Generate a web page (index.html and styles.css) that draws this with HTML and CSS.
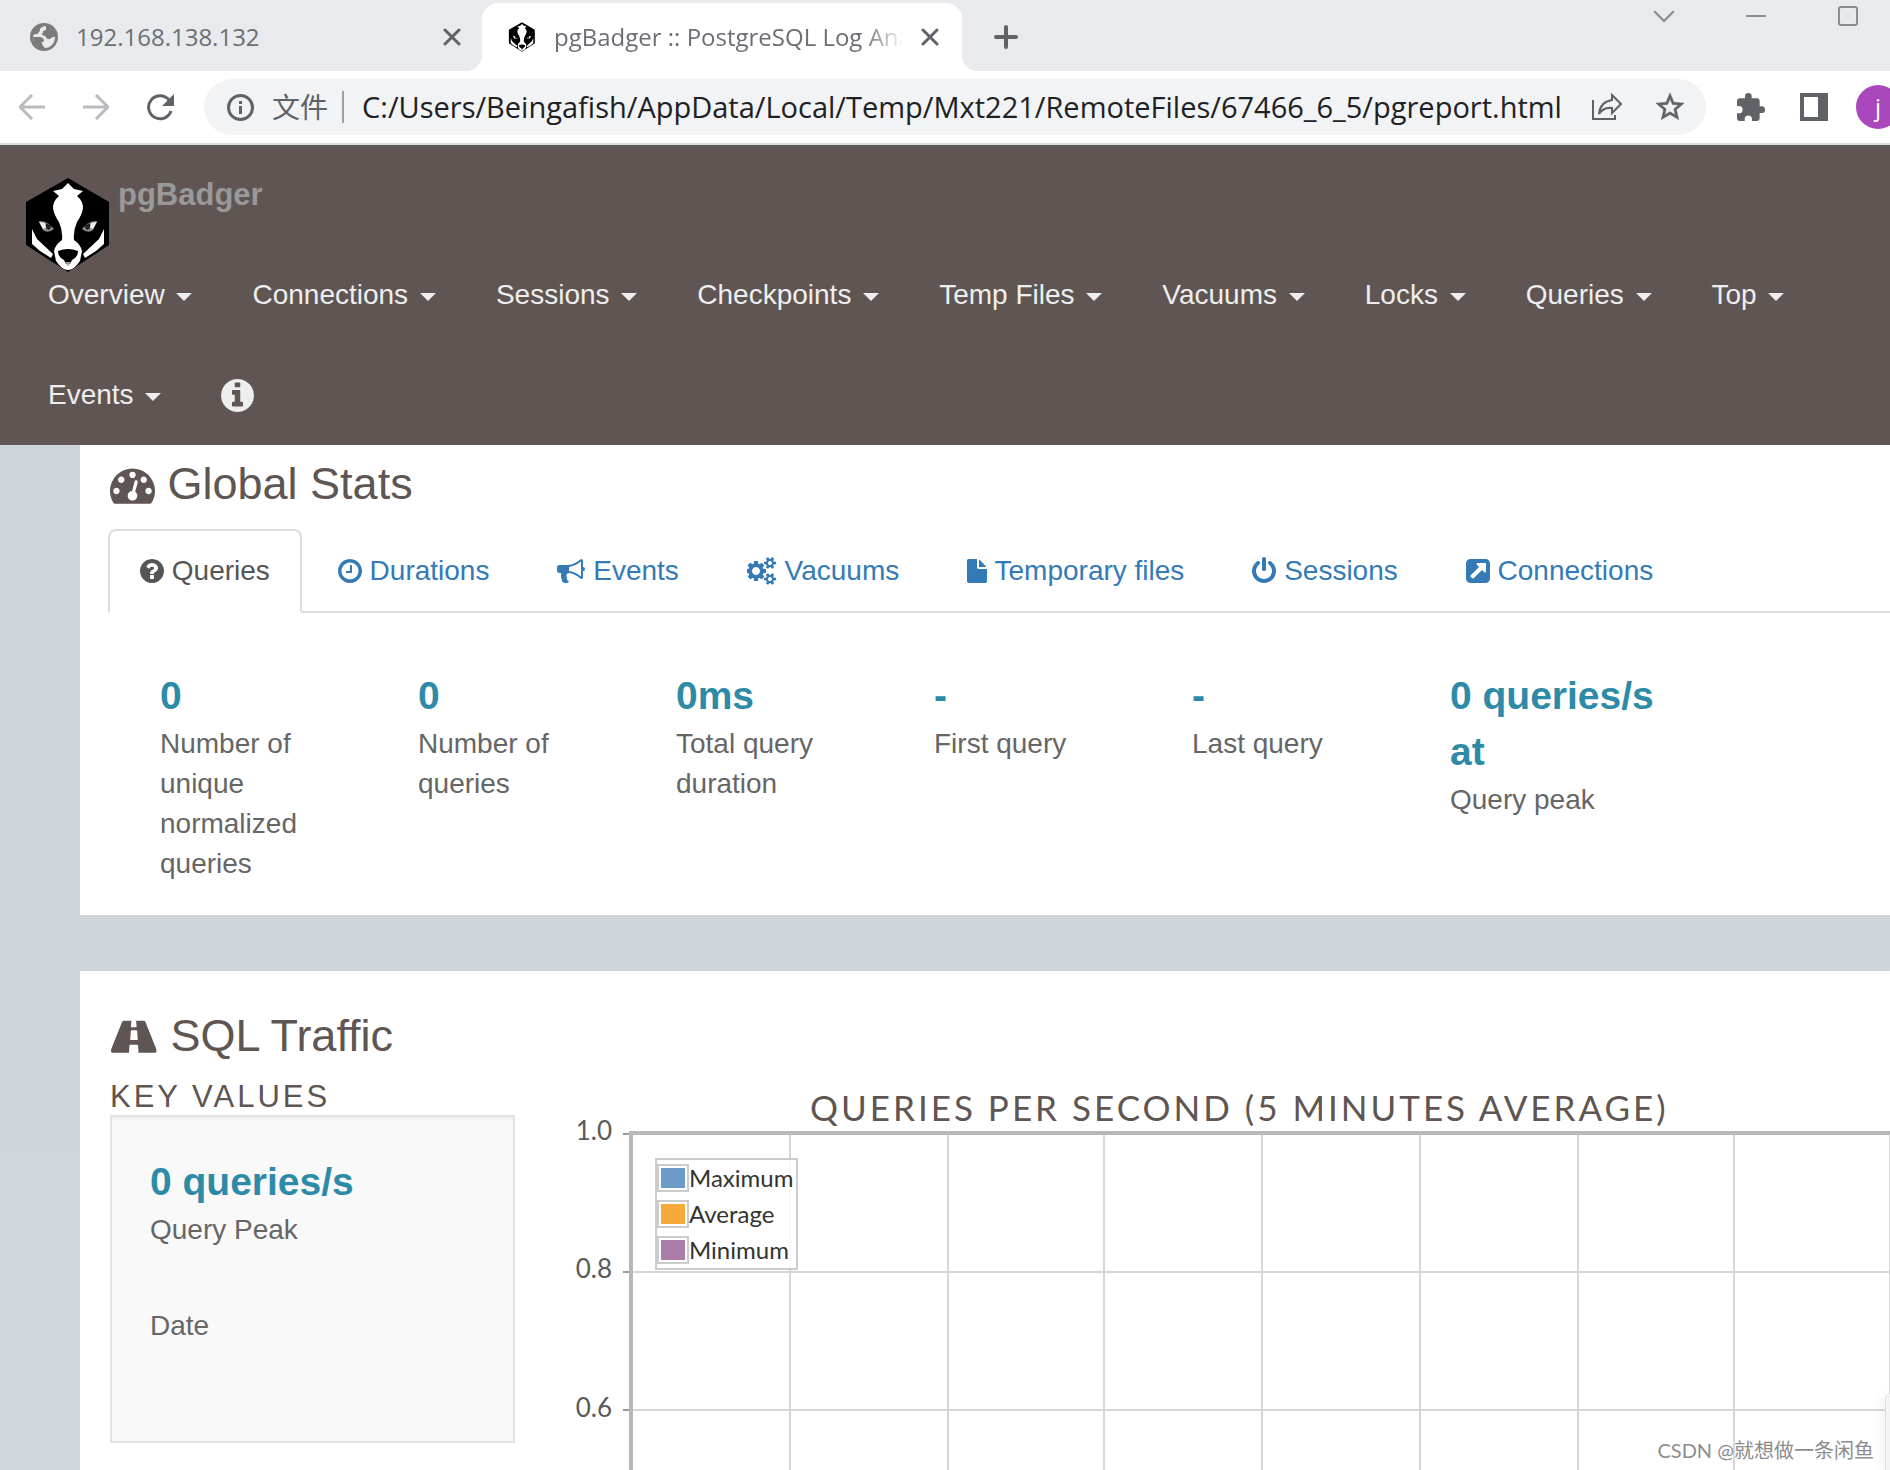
FILE: index.html
```html
<!DOCTYPE html>
<html lang="en">
<head>
<meta charset="utf-8">
<title>pgBadger :: PostgreSQL Log Analyzer</title>
<link rel="stylesheet" href="styles.css">
</head>
<body>
<svg class="defs" aria-hidden="true">
  <symbol id="badger" viewBox="0 0 84 96">
    <path d="M42 1 83 25V68L42 95 0 68V25Z" fill="#000"/>
    <path d="M42 6 48 12 57 14 51 19Q57 24 57 31 56 38 51 45 47 54 48 63 55 68 56 74L54 84Q48 93 42 93 36 93 30 84L28 74Q29 68 36 63 37 54 33 45 28 38 27 31 27 24 33 19L27 14 36 12Z" fill="#fff"/>
    <path d="M32 74Q42 70 52 74 52 80 46 83L44 87H40L38 83Q32 80 32 74Z" fill="#000"/>
    <path d="M39 85H45L42 89Z" fill="#999"/>
    <path d="M6 52 11 62 27 77 25 81 14 74 6 67ZM78 52 73 62 57 77 59 81 70 74 78 67Z" fill="#fff"/>
    <path d="M13 44Q21 43 28 52 22 57 17 53ZM71 44Q63 43 56 52 62 57 67 53Z" fill="#888"/>
    <path d="M13 45 19 46 20 51 17 52ZM71 45 65 46 64 51 67 52Z" fill="#eee"/>
    <path d="M20 46 26 49 23 53 20 51ZM64 46 58 49 61 53 64 51Z" fill="#222"/>
  </symbol>
</svg>

<header class="browser">
  <div class="tabstrip">
    <div class="tab">
      <svg class="favicon" viewBox="0 0 28 28"><circle cx="14" cy="14" r="14" fill="#7b7b7b"/><path d="M16 3C12 3 9 6 10 8 8 9 9 12 4 11 2 16 3 19 6 19H10C13 20 12 23 15 25 21 25 25 20 25 14H22C20 17 17 17 16 14 15 12 11 13 12 10 14 11 14 8 16 7Z" fill="#e8eaed"/><path d="M3 14H9Q14 14 14 18L11 20V25Q3 22 3 14ZM16 3H18Q25 6 25 13 21 16 18 14L17 11H13V8L16 7Z" fill="#7b7b7b"/></svg>
      <span class="tab-title">192.168.138.132</span>
      <button class="icon-btn" aria-label="Close tab"><svg width="18" height="18" viewBox="0 0 18 18"><path d="M2 2 16 16M16 2 2 16" stroke="#5f6368" stroke-width="3" stroke-linecap="round"/></svg></button>
    </div>
    <div class="tab tab-active">
      <svg class="favicon favicon-badger"><use href="#badger"/></svg>
      <span class="tab-title tab-title-fade">pgBadger :: PostgreSQL Log Analyzer</span>
      <button class="icon-btn" aria-label="Close tab"><svg width="18" height="18" viewBox="0 0 18 18"><path d="M2 2 16 16M16 2 2 16" stroke="#5f6368" stroke-width="3" stroke-linecap="round"/></svg></button>
    </div>
    <button class="icon-btn new-tab" aria-label="New tab"><svg width="24" height="24" viewBox="0 0 24 24"><path d="M12 2V22M2 12H22" stroke="#5f6368" stroke-width="4" stroke-linecap="round"/></svg></button>
    <div class="window-controls">
      <button class="icon-btn" aria-label="Search tabs"><svg width="20" height="20" viewBox="0 0 20 20"><path d="M0 5 10 15 20 5" fill="none" stroke="#8a8b8d" stroke-width="2"/></svg></button>
      <button class="icon-btn" aria-label="Minimize"><svg width="20" height="20" viewBox="0 0 20 20"><path d="M0 10H20" stroke="#8a8b8d" stroke-width="2"/></svg></button>
      <button class="icon-btn" aria-label="Maximize"><svg width="20" height="20" viewBox="0 0 20 20"><rect x="1" y="1" width="18" height="18" rx="2" fill="none" stroke="#8a8b8d" stroke-width="2"/></svg></button>
    </div>
  </div>
  <div class="toolbar">
    <div class="nav-buttons">
      <button class="icon-btn" aria-label="Back"><svg width="26" height="26" viewBox="0 0 26 26"><path d="M26 13H2M13 1 1 13 13 25" fill="none" stroke="#b9bbbe" stroke-width="3"/></svg></button>
      <button class="icon-btn" aria-label="Forward"><svg width="26" height="26" viewBox="0 0 26 26"><path d="M0 13H24M13 1 25 13 13 25" fill="none" stroke="#b9bbbe" stroke-width="3"/></svg></button>
      <button class="icon-btn" aria-label="Reload"><svg width="27" height="27" viewBox="0 0 27 27"><path d="M22 6A11.500 11.500 0 1 0 24 17" fill="none" stroke="#5f6368" stroke-width="3"/><path d="M27 0V12H15Z" fill="#5f6368"/></svg></button>
    </div>
    <div class="omnibox">
      <svg width="27" height="27" viewBox="0 0 27 27"><circle cx="13.500" cy="13.500" r="12" fill="none" stroke="#5f6368" stroke-width="3"/><path d="M12 7h3v3h-3zM12 12h3v8h-3z" fill="#5f6368"/></svg>
      <label class="scheme" for="url">文件</label>
      <input class="url" id="url" type="text" value="C:/Users/Beingafish/AppData/Local/Temp/Mxt221/RemoteFiles/67466_6_5/pgreport.html">
      <button class="icon-btn" aria-label="Share"><svg width="30" height="28" viewBox="0 0 30 28"><path d="M1 7V26H23V22" fill="none" stroke="#5f6368" stroke-width="2"/><path d="M20 2 29 11 20 20V15Q11 14 7 21 8 9 20 7Z" fill="none" stroke="#5f6368" stroke-width="2"/></svg></button>
      <button class="icon-btn" aria-label="Bookmark"><svg width="28" height="28" viewBox="2 2 20 20"><path d="M22 9.240l-7.190-.620L12 2 9.190 8.630 2 9.240l5.460 4.730L5.820 21 12 17.270 18.180 21l-1.630-7.030L22 9.240zM12 15.400l-3.760 2.270 1-4.280-3.320-2.880 4.380-.380L12 6.100l1.710 4.040 4.380.380-3.320 2.880 1 4.280L12 15.400z" fill="#5f6368" stroke="#5f6368" stroke-width=".4"/></svg></button>
    </div>
    <div class="actions">
      <button class="icon-btn" aria-label="Extensions"><svg width="28" height="28" viewBox="2 1 21 21"><path d="M20.500 11H19V7c0-1.100-.9-2-2-2h-4V3.500a2.500 2.500 0 0 0-5 0V5H4c-1.100 0-2 .9-2 2v3.800h1.500a2.700 2.700 0 0 1 0 5.400H2V20c0 1.100.9 2 2 2h3.800v-1.500a2.700 2.700 0 0 1 5.400 0V22H17c1.100 0 2-.9 2-2v-4h1.500a2.500 2.500 0 0 0 0-5z" fill="#5f6368"/></svg></button>
      <button class="icon-btn" aria-label="Side panel"><svg width="28" height="28" viewBox="0 0 28 28"><path fill-rule="evenodd" d="M0 0H28V28H0ZM4 4V24H18V4Z" fill="#5f6368"/></svg></button>
      <button class="avatar" aria-label="Profile">j</button>
    </div>
  </div>
</header>

<nav class="navbar">
  <a class="brand" href="#"><svg class="brand-logo"><use href="#badger"/></svg><span>pgBadger</span></a>
  <ul class="menu">
    <li><a href="#">Overview <span class="caret"></span></a></li>
    <li><a href="#">Connections <span class="caret"></span></a></li>
    <li><a href="#">Sessions <span class="caret"></span></a></li>
    <li><a href="#">Checkpoints <span class="caret"></span></a></li>
    <li><a href="#">Temp Files <span class="caret"></span></a></li>
    <li><a href="#">Vacuums <span class="caret"></span></a></li>
    <li><a href="#">Locks <span class="caret"></span></a></li>
    <li><a href="#">Queries <span class="caret"></span></a></li>
    <li><a href="#">Top <span class="caret"></span></a></li>
    <li><a href="#">Events <span class="caret"></span></a></li>
    <li><a href="#" aria-label="About"><svg class="about" viewBox="128 128 1536 1536"><path d="M1152 1376v-160q0-14-9-23t-23-9h-96v-512q0-14-9-23t-23-9h-320q-14 0-23 9t-9 23v160q0 14 9 23t23 9h96v320h-96q-14 0-23 9t-9 23v160q0 14 9 23t23 9h448q14 0 23-9t9-23zm-128-896v-160q0-14-9-23t-23-9h-192q-14 0-23 9t-9 23v160q0 14 9 23t23 9h192q14 0 23-9t9-23zm640 416q0 209-103 385.500t-279.500 279.500-385.500 103-385.500-103-279.500-279.500-103-385.500 103-385.500 279.500-279.500 385.500-103 385.500 103 279.500 279.500 103 385.500z"/></svg></a></li>
  </ul>
</nav>

<main class="report">
  <section class="panel">
    <h2><svg class="head-icon" viewBox="0 0 1792 1792"><path d="M384 1152q0-53-37.500-90.500t-90.500-37.500-90.500 37.500-37.500 90.500 37.500 90.500 90.500 37.500 90.500-37.500 37.500-90.500zm192-448q0-53-37.500-90.500t-90.500-37.500-90.500 37.500-37.500 90.500 37.500 90.500 90.500 37.500 90.500-37.500 37.500-90.500zm428 481l101-382q6-26-7.500-48.500t-38.500-29.500-48 6.500-30 39.500l-101 382q-60 5-107 43.500t-63 98.500q-20 77 20 146t117 89 146-20 89-117q16-60-6-117t-72-91zm660-33q0-53-37.500-90.500t-90.500-37.500-90.500 37.500-37.500 90.500 37.500 90.500 90.500 37.500 90.500-37.500 37.500-90.500zm-640-640q0-53-37.500-90.500t-90.500-37.500-90.500 37.500-37.500 90.500 37.500 90.500 90.500 37.500 90.500-37.500 37.500-90.500zm448 192q0-53-37.500-90.500t-90.500-37.500-90.500 37.500-37.500 90.500 37.500 90.500 90.500 37.500 90.500-37.500 37.500-90.500zm320 448q0 261-141 483-19 29-54 29h-1402q-35 0-54-29-141-221-141-483 0-182 71-348t191-286 286-191 348-71 348 71 286 191 191 286 71 348z"/></svg> Global Stats</h2>
    <ul class="tabs">
      <li class="active"><a href="#"><svg class="i24" viewBox="128 0 1536 1792"><path d="M1024 1376v-192q0-14-9-23t-23-9h-192q-14 0-23 9t-9 23v192q0 14 9 23t23 9h192q14 0 23-9t9-23zm256-672q0-88-55.500-163t-138.500-116-170-41q-243 0-371 213-15 24 8 42l132 100q7 6 19 6 16 0 25-12 53-68 86-92 34-24 86-24 48 0 85.500 26t37.500 59q0 38-20 61t-68 45q-63 28-115.500 86.500t-52.500 125.500v36q0 14 9 23t23 9h192q14 0 23-9t9-23q0-19 21.500-49.500t54.500-49.500q32-18 49-28.500t46-35 44.500-48 28-60.500 12.500-81zm384 192q0 209-103 385.500t-279.500 279.500-385.500 103-385.500-103-279.500-279.500-103-385.500 103-385.500 279.500-279.500 385.500-103 385.500 103 279.500 279.500 103 385.500z"/></svg> Queries</a></li>
      <li><a href="#"><svg class="i24" viewBox="128 0 1536 1792"><path d="M1024 544v448q0 14-9 23t-23 9h-320q-14 0-23-9t-9-23v-64q0-14 9-23t23-9h224v-352q0-14 9-23t23-9h64q14 0 23 9t9 23zm416 352q0-148-73-273t-198-198-273-73-273 73-198 198-73 273 73 273 198 198 273 73 273-73 198-198 73-273zm224 0q0 209-103 385.500t-279.500 279.500-385.500 103-385.500-103-279.500-279.500-103-385.500 103-385.500 279.500-279.500 385.500-103 385.500 103 279.500 279.500 103 385.500z"/></svg> Durations</a></li>
      <li><a href="#"><svg class="i28" viewBox="0 0 1792 1792"><path d="M1664 640q53 0 90.500 37.500t37.500 90.500-37.500 90.500-90.500 37.500v384q0 52-38 90t-90 38q-417-347-812-380-58 19-91 66t-31 100.500 40 92.500q-20 33-23 65.500t6 58 33.500 55 48 50 61.500 50.500q-29 58-111.500 83t-168.500 11.500-132-55.500q-7-23-29.500-87.500t-32-94.500-23-89-15-101 3.500-98.500 22-110.500h-122q-66 0-113-47t-47-113v-192q0-66 47-113t113-47h480q435 0 896-384 52 0 90 38t38 90v384zm-128 604v-954q-394 302-768 343v270q377 42 768 341z"/></svg> Events</a></li>
      <li><a href="#"><svg class="i30" viewBox="0 0 1920 1792"><path d="M832 896q0-106-75-181t-181-75-181 75-75 181 75 181 181 75 181-75 75-181zm768 512q0-52-38-90t-90-38-90 38-38 90q0 53 37.500 90.500t90.500 37.500 90.500-37.500 37.500-90.500zm0-1024q0-52-38-90t-90-38-90 38-38 90q0 53 37.500 90.500t90.500 37.500 90.500-37.500 37.500-90.500zm-384 421v185q0 10-7 19.500t-16 10.500l-155 24q-11 35-32 76 34 48 90 115 7 11 7 20 0 12-7 19-23 30-82.500 89.500t-78.500 59.500q-11 0-21-7l-115-90q-37 19-77 31-11 108-23 155-7 24-30 24h-186q-11 0-20-7.500t-10-17.500l-23-153q-34-10-75-31l-118 89q-7 7-20 7-11 0-21-8-144-133-144-160 0-9 7-19 10-14 41-53t47-61q-23-44-35-82l-152-24q-10-1-17-9.500t-7-19.500v-185q0-10 7-19.500t16-10.500l155-24q11-35 32-76-34-48-90-115-7-11-7-20 0-12 7-20 22-30 82-89t79-59q11 0 21 7l115 90q34-18 77-32 11-108 23-154 7-24 30-24h186q11 0 20 7.500t10 17.500l23 153q34 10 75 31l118-89q8-7 20-7 11 0 21 8 144 133 144 160 0 8-7 19-12 16-42 54t-45 60q23 48 34 82l152 23q10 2 17 10.500t7 19.500zm640 533v140q0 16-149 31-12 27-30 52 51 113 51 138 0 4-4 7-122 71-124 71-8 0-46-47t-52-68q-20 2-30 2t-30-2q-14 21-52 68t-46 47q-2 0-124-71-4-3-4-7 0-25 51-138-18-25-30-52-149-15-149-31v-140q0-16 149-31 13-29 30-52-51-113-51-138 0-4 4-7 4-2 35-20t59-34 30-16q8 0 46 46.500t52 67.500q20-2 30-2t30 2q51-71 92-112l6-2q4 0 124 70 4 3 4 7 0 25-51 138 17 23 30 52 149 15 149 31zm0-1024v140q0 16-149 31-12 27-30 52 51 113 51 138 0 4-4 7-122 71-124 71-8 0-46-47t-52-68q-20 2-30 2t-30-2q-14 21-52 68t-46 47q-2 0-124-71-4-3-4-7 0-25 51-138-18-25-30-52-149-15-149-31v-140q0-16 149-31 13-29 30-52-51-113-51-138 0-4 4-7 4-2 35-20t59-34 30-16q8 0 46 46.500t52 67.500q20-2 30-2t30 2q51-71 92-112l6-2q4 0 124 70 4 3 4 7 0 25-51 138 17 23 30 52 149 15 149 31z"/></svg> Vacuums</a></li>
      <li><a href="#"><svg class="i20" viewBox="0 -128 1280 1792"><path d="M0 96q0-40 28-68t68-28h544v544q0 40 28 68t68 28h544v800q0 40-28 68t-68 28h-1088q-40 0-68-28t-28-68zM768 24q18 10 36 28l392 392q18 18 36 68h-464z"/></svg> Temporary files</a></li>
      <li><a href="#"><svg class="i24" viewBox="128 0 1536 1792"><path d="M1664 896q0 156-61 298t-164 245-245 164-298 61-298-61-245-164-164-245-61-298q0-182 80.500-343t226.500-270q43-32 95.500-25t83.500 50q32 42 24.500 94.500t-49.500 84.500q-98 74-151.500 181t-53.500 228q0 104 40.500 198.500t109.500 163.500 163.500 109.500 198.500 40.500 198.500-40.500 163.500-109.500 109.500-163.500 40.500-198.500q0-121-53.500-228t-151.500-181q-42-32-49.500-84.500t24.500-94.500q31-43 84-50t95 25q146 109 226.500 270t80.500 343zm-640-768v640q0 52-38 90t-90 38-90-38-38-90v-640q0-52 38-90t90-38 90 38 38 90z"/></svg> Sessions</a></li>
      <li><a href="#"><svg class="i24" viewBox="128 0 1536 1792"><path d="M1408 928v-480q0-26-19-45t-45-19h-480q-42 0-59 39-17 41 14 70l144 144-534 534q-19 19-19 45t19 45l102 102q19 19 45 19t45-19l534-534 144 144q18 19 45 19 12 0 25-5 39-17 39-59zm256-512v960q0 119-84.500 203.500t-203.500 84.500h-960q-119 0-203.500-84.500t-84.500-203.500v-960q0-119 84.500-203.500t203.500-84.500h960q119 0 203.500 84.500t84.500 203.500z"/></svg> Connections</a></li>
    </ul>
    <ul class="stats">
      <li><span class="value">0</span><span class="label">Number of unique normalized queries</span></li>
      <li><span class="value">0</span><span class="label">Number of queries</span></li>
      <li><span class="value">0ms</span><span class="label">Total query duration</span></li>
      <li><span class="value">-</span><span class="label">First query</span></li>
      <li><span class="value">-</span><span class="label">Last query</span></li>
      <li><span class="value">0 queries/s at</span><span class="label">Query peak</span></li>
    </ul>
  </section>

  <section class="panel panel-traffic">
    <h2><svg class="head-icon head-icon-road" viewBox="0 0 1920 1792"><path d="M1111 1005v-4l-24-320q-1-13-11-22.500t-23-9.500h-186q-13 0-23 9.500t-11 22.500l-24 320v4q-1 12 8 20t21 8h244q12 0 21-8t8-20zm749 467q0 73-46 73h-704q13 0 22-9.500t8-22.500l-20-256q-1-13-11-22.500t-23-9.500h-272q-13 0-23 9.500t-11 22.500l-20 256q-1 13 8 22.500t22 9.500h-704q-46 0-46-73 0-54 26-116l417-1044q8-19 26-33t38-14h339q-13 0-23 9.500t-11 22.500l-15 192q-1 14 8 23t22 9h166q13 0 22-9t8-23l-15-192q-1-13-11-22.500t-23-9.500h339q20 0 38 14t26 33l417 1044q26 62 26 116z"/></svg> SQL Traffic</h2>
    <div class="traffic">
      <div class="keys">
        <h4>Key values</h4>
        <ul class="well">
          <li><span class="value">0 queries/s</span><span class="label">Query Peak</span></li>
          <li><span class="value"></span><span class="label">Date</span></li>
        </ul>
      </div>
      <div class="chart">
        <h3>Queries per second (5 minutes average)</h3>
        <div class="plot">
          <svg class="plot-grid" width="1600" height="720" aria-hidden="true">
            <g stroke="#d6d6d6" stroke-width="2">
              <path d="M238 14V720M396 14V720M552 14V720M710 14V720M868 14V720M1026 14V720M1182 14V720M1338 14V720"/>
              <path d="M80 152H1600M80 290H1600"/>
            </g>
            <path d="M71 14H78M71 152H78M71 290H78" stroke="#999" stroke-width="2"/>
            <path d="M79 720V13H1600" fill="none" stroke="#b8b8b8" stroke-width="4"/>
            <g class="ticks" text-anchor="end">
              <text x="60" y="20">1.0</text>
              <text x="60" y="158">0.8</text>
              <text x="60" y="297">0.6</text>
            </g>
          </svg>
          <ul class="legend">
            <li><span class="swatch swatch-max"></span>Maximum</li>
            <li><span class="swatch swatch-avg"></span>Average</li>
            <li><span class="swatch swatch-min"></span>Minimum</li>
          </ul>
        </div>
      </div>
    </div>
  </section>
  <div class="side-flyout"></div>
  <p class="watermark">CSDN @就想做一条闲鱼</p>
</main>
</body>
</html>
```
FILE: styles.css
```css
* { box-sizing: border-box; }

body {
  margin: 0;
  height: 100vh;
  display: flex;
  flex-direction: column;
  overflow: hidden;
  background: #fff;
  font-family: "Liberation Sans", Arial, sans-serif;
  font-size: 28px;
  line-height: 40px;
  color: #666;
}

ul { list-style: none; margin: 0; padding: 0; }
h2, h3, h4, p { margin: 0; font-weight: 400; }
a { color: inherit; text-decoration: none; }
svg { flex: none; }
.defs { position: absolute; width: 0; height: 0; }

.icon-btn {
  display: flex;
  flex: none;
  padding: 0;
  border: 0;
  background: none;
}

/* Browser frame */
.browser {
  flex: none;
  font-family: "Open Sans", "Noto Sans CJK SC", sans-serif;
  border-bottom: 2px solid #dadce0;
}

.tabstrip {
  display: flex;
  height: 71px;
  padding-top: 3px;
  background: #e8eaed;
}

.tab {
  display: flex;
  align-items: center;
  width: 482px;
  padding: 0 21px 0 30px;
}

.tab-active {
  position: relative;
  width: 480px;
  padding: 0 23px 0 26px;
  border-radius: 16px 16px 0 0;
  background: #fff;
}

.tab-active::before,
.tab-active::after {
  content: "";
  position: absolute;
  bottom: 0;
  width: 16px;
  height: 16px;
}
.tab-active::before { right: 100%; background: radial-gradient(circle at 0 0, transparent 16px, #fff 16px); }
.tab-active::after { left: 100%; background: radial-gradient(circle at 100% 0, transparent 16px, #fff 16px); }

.favicon { width: 28px; height: 28px; }
.favicon-badger { height: 30px; }

.tab-title {
  flex: 1;
  margin: 0 16px 0 18px;
  overflow: hidden;
  white-space: nowrap;
  font-size: 24px;
  line-height: 36px;
  color: #6b6f74;
}
.tab-title-fade {
  mask-image: linear-gradient(to right, #000 310px, transparent 350px);
}

.new-tab { align-self: center; margin-left: 32px; }

.window-controls {
  display: flex;
  align-self: flex-start;
  gap: 72px;
  margin-left: auto;
  padding: 3px 32px 0 0;
}

.toolbar {
  display: flex;
  align-items: center;
  height: 72px;
  padding-left: 19px;
}

.nav-buttons { display: flex; gap: 38px; }

.omnibox {
  display: flex;
  flex: 1;
  align-items: center;
  gap: 34px;
  height: 56px;
  margin: 0 31px 0 30px;
  padding: 0 22px 0 23px;
  border-radius: 28px;
  background: #f1f3f4;
}

.scheme {
  margin: 0 -20px 0 -16px;
  padding-right: 14px;
  border-right: 2px solid #9aa0a6;
  font-size: 28px;
  line-height: 32px;
  color: #5f6368;
}

.url {
  flex: 1;
  min-width: 0;
  height: 40px;
  margin-right: -16px;
  padding: 0 0 0 4px;
  border: 0;
  background: none;
  font: 29px/40px "Open Sans", sans-serif;
  color: #202124;
}

.actions {
  display: flex;
  align-items: center;
  gap: 28px;
  margin-right: -10px;
}
.actions .icon-btn:first-child { margin-right: 7px; }

.avatar {
  width: 44px;
  height: 44px;
  padding: 0;
  border: 0;
  border-radius: 50%;
  background: #ab47bc;
  font: 24px/40px "Open Sans", sans-serif;
  color: #fff;
}

/* Report navigation */
.navbar { flex: none; background: #5f5553; }

.brand {
  display: flex;
  gap: 8px;
  height: 100px;
  padding: 30px 26px 0;
  font-size: 31px;
  font-weight: 700;
  color: #999;
}
.brand-logo { width: 84px; height: 96px; margin-top: 2px; }

.menu {
  display: flex;
  flex-wrap: wrap;
  padding: 0 18px;
  color: #eee;
}
.menu a { display: block; padding: 30px; }

.caret {
  display: inline-block;
  margin-left: 4px;
  border: 8px solid transparent;
  border-top-color: currentColor;
  border-bottom: 0;
  vertical-align: middle;
}

.about {
  display: block;
  width: 33px;
  height: 33px;
  margin: 4px 0 3px;
  fill: currentColor;
}

/* Report body */
.report {
  position: relative;
  flex: 1;
  min-height: 0;
  overflow: hidden;
  padding-left: 80px;
  background: linear-gradient(#cdd5d8, #d1d7dc);
}

.panel {
  margin-bottom: 56px;
  padding: 15px 0 31px 28px;
  background: #fff;
}
.panel-traffic {
  height: 100%;
  padding: 41px 0 0 30px;
}

h2 {
  padding-left: 2px;
  font-size: 45px;
  line-height: 48px;
  color: #5f5553;
}
.panel-traffic h2 { padding-left: 0; }

.head-icon {
  width: 45px;
  height: 45px;
  vertical-align: -8px;
  fill: currentColor;
}
.head-icon-road { width: 48px; }

.tabs {
  display: flex;
  gap: 4px;
  margin-top: 21px;
  border-bottom: 2px solid #ddd;
  color: #337ab7;
}
.tabs a {
  display: block;
  margin-bottom: -2px;
  padding: 20px 30px;
  border: 2px solid transparent;
  border-radius: 8px 8px 0 0;
  white-space: nowrap;
}
.tabs .active a {
  border-color: #ddd;
  border-bottom-color: #fff;
  background: #fff;
  color: #555;
}
.tabs svg { height: 28px; vertical-align: -5px; fill: currentColor; }
.i20 { width: 20px; }
.i24 { width: 24px; }
.i28 { width: 28px; }
.i30 { width: 30px; }

.stats {
  display: grid;
  grid-template-columns: repeat(6, minmax(0, 210px));
  gap: 48px;
  padding: 55px 0 0 52px;
}

.value {
  display: block;
  min-height: 56px;
  font-size: 39px;
  font-weight: 700;
  line-height: 56px;
  color: #2e8ba8;
}
.label { display: block; }

/* SQL traffic */
.traffic {
  display: flex;
  gap: 37px;
  margin-top: 19px;
}

.keys { flex: none; width: 405px; }

h4 {
  font-size: 31px;
  line-height: 36px;
  letter-spacing: 3px;
  text-transform: uppercase;
  color: #5f5553;
}

.well {
  height: 328px;
  padding: 37px 38px;
  border: 2px solid #e3e3e3;
  background: #f9f9f9;
  box-shadow: inset 0 2px 2px rgba(0, 0, 0, .05);
}

.chart {
  flex: 1;
  min-width: 0;
  font-family: "Trebuchet MS", Lato, sans-serif;
}

h3 {
  margin: 6px 0 0 258px;
  font-size: 35px;
  line-height: 44px;
  letter-spacing: 3px;
  text-transform: uppercase;
  white-space: nowrap;
  color: #5f5553;
}

.plot { position: relative; margin-top: -9px; }
.plot-grid { display: block; overflow: visible; }
.ticks { font-size: 26px; fill: #5a5a5a; }

.legend {
  position: absolute;
  top: 38px;
  left: 103px;
  width: 143px;
  border: 2px solid #ccc;
  background: rgba(255, 255, 255, .85);
  font-size: 24px;
  line-height: 36px;
  color: #333;
}
.legend li { display: flex; align-items: center; }

.swatch {
  width: 32px;
  height: 28px;
  border: 2px solid #ccc;
  box-shadow: inset 0 0 0 2px #fff;
}
.swatch-max { background: #6d9bc9; }
.swatch-avg { background: #f4a938; }
.swatch-min { background: #aa7ca8; }

.side-flyout {
  position: absolute;
  right: 0;
  bottom: 0;
  width: 5px;
  height: 76px;
  border-left: 1px solid #ddd;
  border-top-left-radius: 5px;
  background: #f4f4f4;
  box-shadow: -2px 0 12px rgba(0, 0, 0, .1);
}

.watermark {
  position: absolute;
  right: 16px;
  bottom: 5px;
  font-family: Lato, "Noto Sans CJK SC", sans-serif;
  font-size: 20px;
  line-height: 30px;
  color: #8c8c8c;
  text-shadow: -1px -1px 0 #fff;
}
```
